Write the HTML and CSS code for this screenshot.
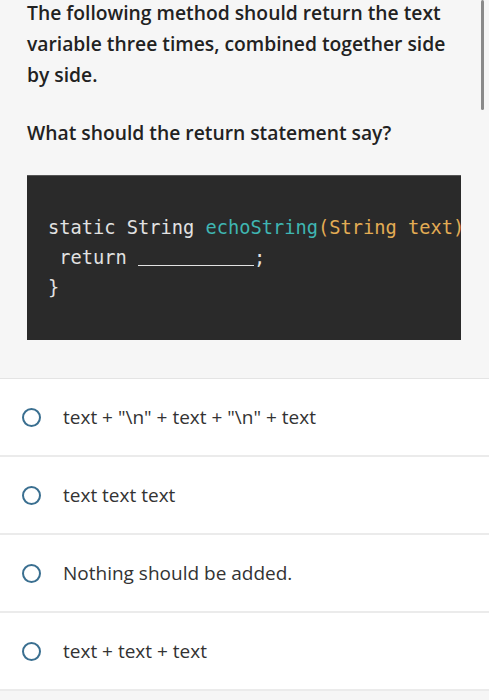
FILE: index.html
```html
<!DOCTYPE html>
<html>
<head>
<meta charset="utf-8">
<link rel="stylesheet" href="styles.css">
</head>
<body>
<div class="scrollbar"></div>
<section class="question">
  <p class="para">The following method should return the text variable three times, combined together side by side.</p>
  <p class="para ask">What should the return statement say?</p>
  <div class="code">
<pre><span class="plain">static String </span><span class="fn">echoString</span><span class="arg">(String text)</span></pre>
<pre><span class="plain"> return </span><span class="blank"></span><span class="plain">;</span></pre>
<pre><span class="plain">}</span></pre>
  </div>
</section>
<ul class="options">
  <li class="option"><span class="radio"></span><span class="label">text + "\n" + text + "\n" + text</span></li>
  <li class="option"><span class="radio"></span><span class="label">text text text</span></li>
  <li class="option"><span class="radio"></span><span class="label">Nothing should be added.</span></li>
  <li class="option"><span class="radio"></span><span class="label">text + text + text</span></li>
</ul>
</body>
</html>
```
FILE: styles.css
```css
html, body {
  margin: 0;
  padding: 0;
  background: #f6f6f6;
  width: 489px;
  height: 700px;
  overflow: hidden;
}
body {
  font-family: "Open Sans", "Liberation Sans", sans-serif;
  color: #222;
  position: relative;
}
.scrollbar {
  position: absolute;
  left: 481px;
  top: 0;
  width: 3px;
  height: 110px;
  background: #8a8a8a;
  border-radius: 2px;
}
.question {
  padding: 0 27px 38px 27px;
}
.para {
  margin: -3px 0 0 0;
  font-size: 19.3px;
  font-weight: 600;
  line-height: 31px;
  letter-spacing: 0;
}
.para.ask {
  margin-top: 27px;
}
.code {
  margin-top: 27px;
  width: 434px;
  height: 165px;
  box-sizing: border-box;
  background: #2a2a2a;
  border-top: 1px solid #555;
  padding: 37px 0 0 21px;
  overflow: hidden;
}
.code pre {
  margin: 0;
  font-family: "DejaVu Sans Mono", monospace;
  font-size: 18.7px;
  line-height: 30px;
  white-space: pre;
}
.plain { color: #e2e2e2; }
.fn { color: #3fb6b2; }
.arg { color: #e3ac54; }
.blank {
  display: inline-block;
  width: 116px;
  border-bottom: 1.5px solid #e2e2e2;
  height: 1px;
  vertical-align: -2px;
}
.options {
  list-style: none;
  margin: 0;
  padding: 0;
  border-top: 1px solid #e4e4e4;
  background: #fff;
}
.option {
  display: flex;
  align-items: center;
  height: 76px;
  border-bottom: 2px solid #ebebeb;
  padding-left: 22px;
}
.radio {
  width: 15px;
  height: 15px;
  border: 2.5px solid #3a6f90;
  border-radius: 50%;
  flex: none;
}
.label {
  margin-left: 22px;
  font-family: "Open Sans", "Liberation Sans", sans-serif;
  font-size: 19px;
  color: #333;
  letter-spacing: 0;
}
```
